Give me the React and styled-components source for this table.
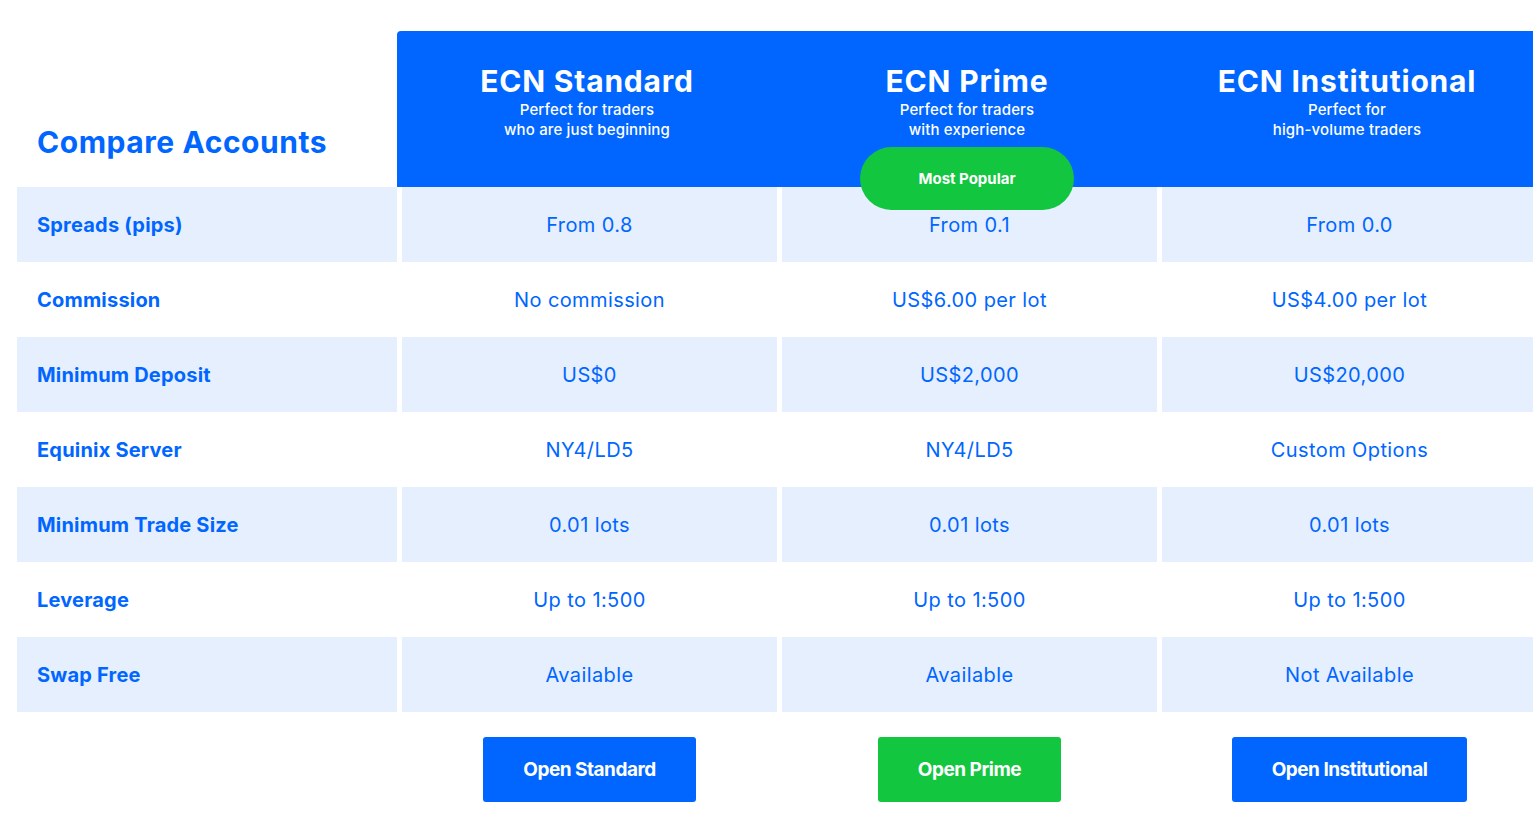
import React from "react";
import styled, { createGlobalStyle } from "styled-components";

const Global = createGlobalStyle`
  html, body { margin: 0; padding: 0; overflow: hidden; background: #ffffff; }
  body { font-family: Inter, "Noto Sans", "Liberation Sans", sans-serif; }
  * { box-sizing: border-box; }
`;

const BLUE = "#0066ff";
const LIGHT = "#e5effe";
const GREEN = "#13c63f";

const Page = styled.div`
  width: 1537px;
  padding: 31px 0 0 17px;
`;

const HeaderRow = styled.div`
  display: grid;
  grid-template-columns: 380px 1140px;
  height: 156px;
`;

const PageTitle = styled.h1`
  align-self: end;
  margin: 0;
  padding: 0 0 27px 20px;
  font-size: 30px;
  line-height: 36px;
  font-weight: 700;
  color: ${BLUE};
  letter-spacing: 0.55px;
`;

const PlanHeader = styled.div`
  background: ${BLUE};
  border-radius: 4px 0 0 0;
  display: grid;
  grid-template-columns: repeat(3, 380px);
`;

const PlanCol = styled.div`
  position: relative;
  text-align: center;
  color: #ffffff;
  padding-top: 31px;
`;

const PlanName = styled.div`
  font-size: 30px;
  line-height: 38px;
  font-weight: 700;
  letter-spacing: 0.8px;
`;

const PlanSub = styled.div`
  font-size: 15px;
  line-height: 20px;
  font-weight: 500;
  letter-spacing: 0.15px;
  &:first-of-type { margin-top: 1px; }
`;

const Badge = styled.div`
  position: absolute;
  left: 50%;
  bottom: -23px;
  transform: translateX(-50%);
  width: 214px;
  height: 63px;
  border-radius: 32px;
  background: ${GREEN};
  color: #ffffff;
  font-size: 15px;
  font-weight: 700;
  display: flex;
  align-items: center;
  justify-content: center;
  z-index: 2;
`;

const Row = styled.div`
  display: grid;
  grid-template-columns: 380px repeat(3, 375px);
  column-gap: 5px;
  height: 75px;
`;

const LabelCell = styled.div`
  display: flex;
  align-items: center;
  padding-left: 20px;
  font-size: 20px;
  font-weight: 700;
  letter-spacing: 0.2px;
  color: ${BLUE};
  background: ${(p) => (p.$shaded ? LIGHT : "transparent")};
`;

const ValueCell = styled.div`
  display: flex;
  align-items: center;
  justify-content: center;
  font-size: 20px;
  font-weight: 400;
  letter-spacing: 0.4px;
  color: ${BLUE};
  background: ${(p) => (p.$shaded ? LIGHT : "transparent")};
`;

const ButtonRow = styled.div`
  display: grid;
  grid-template-columns: 380px repeat(3, 375px);
  column-gap: 5px;
  padding-top: 25px;
`;

const ButtonCell = styled.div`
  display: flex;
  justify-content: center;
`;

const OpenButton = styled.button`
  height: 65px;
  padding: 0 40px;
  border: none;
  border-radius: 3px;
  background: ${(p) => (p.$green ? GREEN : BLUE)};
  color: #ffffff;
  font-family: inherit;
  font-size: 19px;
  font-weight: 700;
  letter-spacing: -0.5px;
  cursor: pointer;
`;

const plans = [
  { name: "ECN Standard", sub: ["Perfect for traders", "who are just beginning"] },
  { name: "ECN Prime", sub: ["Perfect for traders", "with experience"], popular: true },
  { name: "ECN Institutional", sub: ["Perfect for", "high-volume traders"] },
];

const rows = [
  ["Spreads (pips)", "From 0.8", "From 0.1", "From 0.0"],
  ["Commission", "No commission", "US$6.00 per lot", "US$4.00 per lot"],
  ["Minimum Deposit", "US$0", "US$2,000", "US$20,000"],
  ["Equinix Server", "NY4/LD5", "NY4/LD5", "Custom Options"],
  ["Minimum Trade Size", "0.01 lots", "0.01 lots", "0.01 lots"],
  ["Leverage", "Up to 1:500", "Up to 1:500", "Up to 1:500"],
  ["Swap Free", "Available", "Available", "Not Available"],
];

export default function App() {
  return (
    <>
      <Global />
      <Page>
        <HeaderRow>
          <PageTitle>Compare Accounts</PageTitle>
          <PlanHeader>
            {plans.map((p) => (
              <PlanCol key={p.name}>
                <PlanName>{p.name}</PlanName>
                {p.sub.map((s) => (
                  <PlanSub key={s}>{s}</PlanSub>
                ))}
                {p.popular && <Badge>Most Popular</Badge>}
              </PlanCol>
            ))}
          </PlanHeader>
        </HeaderRow>
        {rows.map((r, i) => (
          <Row key={r[0]}>
            <LabelCell $shaded={i % 2 === 0}>{r[0]}</LabelCell>
            {r.slice(1).map((v, j) => (
              <ValueCell key={j} $shaded={i % 2 === 0}>
                {v}
              </ValueCell>
            ))}
          </Row>
        ))}
        <ButtonRow>
          <div />
          <ButtonCell>
            <OpenButton>Open Standard</OpenButton>
          </ButtonCell>
          <ButtonCell>
            <OpenButton $green>Open Prime</OpenButton>
          </ButtonCell>
          <ButtonCell>
            <OpenButton>Open Institutional</OpenButton>
          </ButtonCell>
        </ButtonRow>
      </Page>
    </>
  );
}
